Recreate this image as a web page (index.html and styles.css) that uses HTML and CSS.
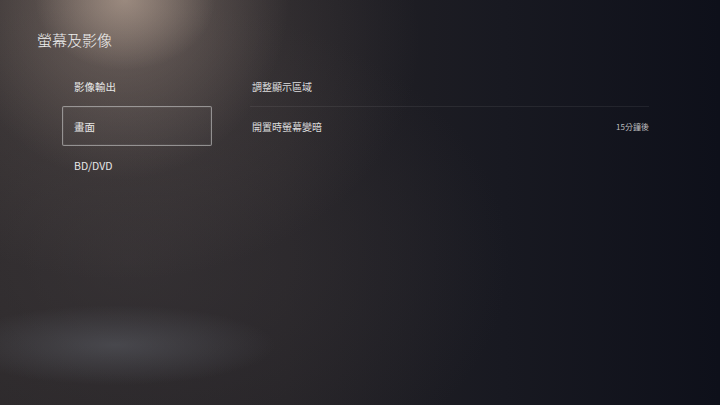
FILE: index.html
```html
<!DOCTYPE html>
<html lang="zh-Hant">

<head>
    <meta charset="UTF-8">
    <meta name="viewport" content="width=device-width, initial-scale=1.0">
    <title>螢幕及影像</title>
    <link rel="stylesheet" href="styles.css">
</head>

<body>
    <div class="screen">
        <h1 class="title">螢幕及影像</h1>

        <div class="content">
            <ul class="menu">
                <li class="menu-item">影像輸出</li>
                <li class="menu-item selected">畫面</li>
                <li class="menu-item">BD/DVD</li>
            </ul>

            <ul class="options">
                <li class="option divided">
                    <span>調整顯示區域</span>
                </li>
                <li class="option">
                    <span>開置時螢幕變暗</span>
                    <span class="value">15分鐘後</span>
                </li>
            </ul>
        </div>
    </div>
</body>

</html>
```

FILE: styles.css
```css
html,
body {
    margin: 0;
    height: 100%;
}

body {
    font-family: "Noto Sans CJK TC", "Noto Sans", sans-serif;
    color: #e6e6e6;
    background:
        radial-gradient(ellipse 90px 70px at 125px 0, rgba(185, 165, 150, 0.6), transparent),
        radial-gradient(ellipse 170px 190px at 120px -10px, rgba(150, 132, 122, 0.55), transparent),
        radial-gradient(ellipse 300px 240px at 120px 40px, rgba(110, 98, 94, 0.4), transparent),
        radial-gradient(ellipse 160px 40px at 115px 345px, rgba(95, 98, 106, 0.5), transparent),
        radial-gradient(ellipse 380px 260px at 130px 260px, rgba(70, 64, 66, 0.45), transparent),
        linear-gradient(to right, #2a2729 0%, #242226 40%, #181921 70%, #0e101a 100%);
    overflow: hidden;
}

.screen {
    height: 100%;
    padding: 30px 0 0 37px;
    box-sizing: border-box;
}

.title {
    margin: 0;
    font-size: 15px;
    font-weight: 300;
    line-height: 20px;
    color: #f0f0f0;
}

.content {
    display: flex;
    gap: 38px;
    margin-top: 17px;
}

.menu,
.options {
    list-style: none;
    margin: 0;
    padding: 0;
}

.menu {
    width: 150px;
    margin-left: 25px;
}

.menu-item {
    height: 39px;
    display: flex;
    align-items: center;
    padding-left: 11px;
    font-size: 10.5px;
    border: 1px solid transparent;
    border-radius: 2px;
    box-sizing: border-box;
}

.menu-item.selected {
    height: 40px;
    border-color: rgba(200, 200, 200, 0.6);
    background: rgba(255, 255, 255, 0.02);
    box-shadow: inset 0 0 0 1px rgba(255, 255, 255, 0.05);
}

.options {
    width: 399px;
}

.option {
    height: 39px;
    display: flex;
    align-items: center;
    justify-content: space-between;
    padding-left: 2px;
    font-size: 10px;
    color: #dcdcdc;
}

.option.divided {
    border-bottom: 1px solid rgba(255, 255, 255, 0.07);
}

.value {
    font-size: 8px;
    color: #bdbdbd;
}
```
